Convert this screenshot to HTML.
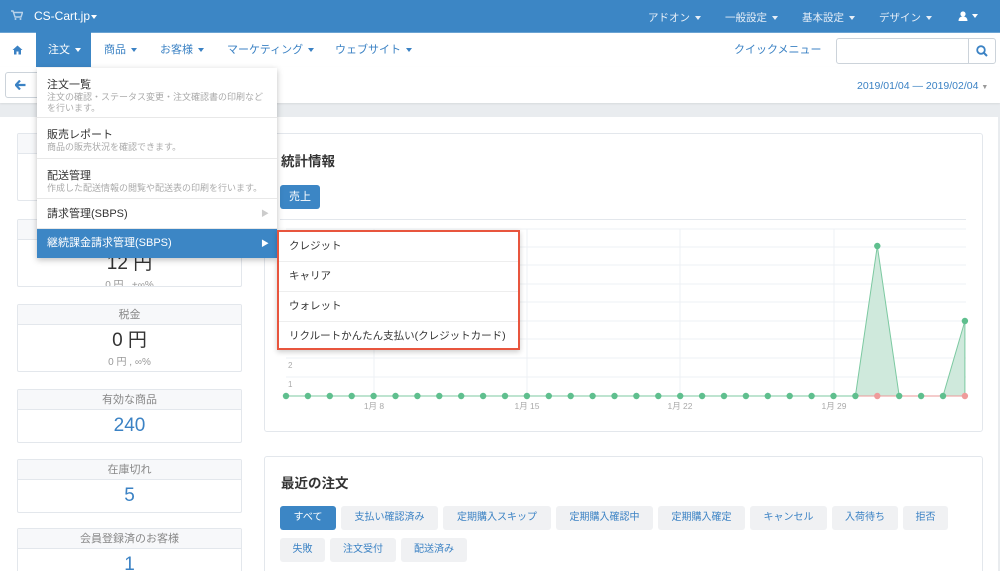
<!DOCTYPE html>
<html><head><meta charset="utf-8"><style>
*{box-sizing:border-box;margin:0;padding:0}
html{width:1000px;height:571px;overflow:hidden}
body{width:1000px;height:571px;overflow:hidden;background:#e9ecef;font-family:"Liberation Sans","Noto Sans CJK JP",sans-serif;font-size:11px;color:#333;position:relative}
.a{position:absolute}
.top{left:0;top:0;width:1000px;height:32px;background:#3c86c5;color:#e6eef7}
.nav{left:0;top:32px;width:1000px;height:35px;background:#fff;border-top:1px solid #6aa3d3}
.nv{top:0;height:35px;line-height:35px;color:#3b82c4;font-size:11px}
.car{display:inline-block;width:0;height:0;border-left:3.5px solid transparent;border-right:3.5px solid transparent;border-top:4px solid currentColor;vertical-align:middle;margin-left:5px}
.tb{left:0;top:67px;width:1000px;height:36px;background:#fff;box-shadow:0 1px 2px rgba(0,0,0,.08)}
.main{left:0;top:117px;width:998px;height:460px;background:#fff}
.card{left:17px;width:225px;border:1px solid #e3e7ec;border-radius:2px;background:#fff;text-align:center;overflow:hidden}
.card .h{height:20px;line-height:20px;background:#f7f8fa;border-bottom:1px solid #e3e7ec;color:#888;font-size:11px}
.big{font-size:19px;color:#333;line-height:24px;margin-top:4px}
.blue{color:#3b82c4}
.sub{color:#999;font-size:10px}
.panel{border:1px solid #e3e7ec;border-radius:3px;background:#fff}
.dd{left:37px;top:68px;width:240px;height:190px;background:#fff;box-shadow:0 2px 6px rgba(0,0,0,.25)}
.di{position:absolute;left:0;width:240px;border-bottom:1px solid #e8e8e8;padding-left:10px}
.di b{display:block;font-weight:normal;font-size:11px;color:#333}
.di i{display:block;font-style:normal;font-size:9px;color:#aaa;line-height:11px}
.sm{left:277px;top:230px;width:243px;height:120px;background:#fff;border:2px solid #e8553e;box-shadow:0 2px 5px rgba(0,0,0,.2)}
.si{position:absolute;left:0;width:239px;height:30px;line-height:28px;padding-left:10px;border-bottom:1px solid #eee;font-size:10.5px}
.btn{position:absolute;height:24px;line-height:24px;border-radius:3px;background:#f0f1f3;color:#3b82c4;font-size:10px;text-align:center}
</style></head><body>
<div class="a top">
 <svg class="a" style="left:11px;top:10px" width="12" height="10"><path d="M0 1h2l2 6h6l1.5-4.5H3" fill="none" stroke="#b9d2ea" stroke-width="1.4"/><circle cx="4.5" cy="9" r="1" fill="#b9d2ea"/><circle cx="9.5" cy="9" r="1" fill="#b9d2ea"/></svg>
 <span class="a" style="left:34px;top:9px;font-size:12px;color:#fff">CS-Cart.jp<span class="car" style="margin-left:1px"></span></span>
 <span class="a" style="left:648px;top:10px;font-size:10.5px">アドオン<span class="car"></span></span>
 <span class="a" style="left:725px;top:10px;font-size:10.5px">一般設定<span class="car"></span></span>
 <span class="a" style="left:802px;top:10px;font-size:10.5px">基本設定<span class="car"></span></span>
 <span class="a" style="left:879px;top:10px;font-size:10.5px">デザイン<span class="car"></span></span>
 <svg class="a" style="left:958px;top:11px" width="10" height="10"><circle cx="5" cy="3" r="2.6" fill="#fff"/><path d="M0.5 10Q0.5 5.5 5 5.5Q9.5 5.5 9.5 10Z" fill="#fff"/></svg>
 <span class="a" style="left:967px;top:10px;color:#fff"><span class="car"></span></span>
</div>
<div class="a nav">
 <svg class="a" style="left:12px;top:12px" width="11" height="10"><path d="M5.5 0.5L0.5 5h1.5v4.5h2.5v-3h2v3h2.5V5h1.5z" fill="#3b82c4"/></svg>
 <div class="a" style="left:36px;top:-1px;width:55px;height:36px;background:#3c86c5"></div>
 <span class="a nv" style="left:48px;color:#fff">注文<span class="car"></span></span>
 <span class="a nv" style="left:104px">商品<span class="car"></span></span>
 <span class="a nv" style="left:160px">お客様<span class="car"></span></span>
 <span class="a nv" style="left:227px">マーケティング<span class="car"></span></span>
 <span class="a nv" style="left:335px">ウェブサイト<span class="car"></span></span>
 <span class="a nv" style="left:734px">クイックメニュー</span>
 <div class="a" style="left:836px;top:5px;width:160px;height:26px;border:1px solid #ccd3da;border-radius:3px"></div>
 <div class="a" style="left:968px;top:5px;width:1px;height:26px;background:#ccd3da"></div>
 <svg class="a" style="left:976px;top:12px" width="12" height="12"><circle cx="5" cy="5" r="3.8" fill="none" stroke="#3b82c4" stroke-width="1.8"/><line x1="8" y1="8" x2="11" y2="11" stroke="#3b82c4" stroke-width="2"/></svg>
</div>
<div class="a tb">
 <div class="a" style="left:5px;top:5px;width:40px;height:26px;border:1px solid #ccd3da;border-radius:3px"></div>
 <svg class="a" style="left:15px;top:13px" width="11" height="10"><path d="M5 0.5L0.8 5L5 9.5M1 5H10.5" fill="none" stroke="#3b82c4" stroke-width="2.2"/></svg>
 <span class="a" style="left:857px;top:13px;color:#3b82c4;font-size:10.5px">2019/01/04 — 2019/02/04 <span style="color:#999;font-size:7px">▼</span></span>
</div>
<div class="a main"></div>
<div class="a card" style="top:133px;height:68px"><div class="h"></div></div>
<div class="a card" style="top:219px;height:68px"><div class="h"></div><div class="big" style="margin-top:12px">12 円</div><div class="sub">0 円 , +∞%</div></div>
<div class="a card" style="top:304px;height:68px"><div class="h">税金</div><div class="big">0 円</div><div class="sub">0 円 , ∞%</div></div>
<div class="a card" style="top:389px;height:54px"><div class="h">有効な商品</div><div class="big blue">240</div></div>
<div class="a card" style="top:459px;height:54px"><div class="h">在庫切れ</div><div class="big blue">5</div></div>
<div class="a card" style="top:528px;height:54px"><div class="h">会員登録済のお客様</div><div class="big blue">1</div></div>

<div class="a panel" style="left:264px;top:133px;width:719px;height:299px"></div>
<span class="a" style="left:281px;top:150px;font-size:13.5px;font-weight:bold">統計情報</span>
<div class="a" style="left:280px;top:185px;width:40px;height:24px;background:#3c86c5;border-radius:3px;color:#fff;text-align:center;line-height:24px;font-size:11px">売上</div>
<div class="a" style="left:280px;top:219px;width:686px;height:1px;background:#e3e7ec"></div>
<svg class="a" style="left:0;top:0" width="1000" height="440">
 <g stroke="#eef1f4" stroke-width="1">
  <line x1="286" x2="966" y1="229" y2="229"/><line x1="286" x2="966" y1="247" y2="247"/><line x1="286" x2="966" y1="265" y2="265"/><line x1="286" x2="966" y1="284" y2="284"/><line x1="286" x2="966" y1="302" y2="302"/><line x1="286" x2="966" y1="321" y2="321"/><line x1="286" x2="966" y1="339" y2="339"/><line x1="286" x2="966" y1="358" y2="358"/><line x1="286" x2="966" y1="377" y2="377"/>
  <line x1="374" x2="374" y1="229" y2="396"/><line x1="527" x2="527" y1="229" y2="396"/><line x1="680" x2="680" y1="229" y2="396"/><line x1="834" x2="834" y1="229" y2="396"/>
 </g>
 <text x="288" y="368" font-size="8" fill="#aaa">2</text><text x="288" y="387" font-size="8" fill="#aaa">1</text>
 <g font-size="8.5" fill="#aaa" text-anchor="middle"><text x="374" y="409">1月 8</text><text x="527" y="409">1月 15</text><text x="680" y="409">1月 22</text><text x="834" y="409">1月 29</text></g>
 <polygon points="855.4,396 877.3,246 899.2,396" fill="#cfe9dc" stroke="#7cc9a1"/>
 <polygon points="943,396 964.9,321 964.9,396" fill="#cfe9dc" stroke="#7cc9a1"/>
 <line x1="286" x2="966" y1="396" y2="396" stroke="#7cc9a1"/>
 <line x1="855" x2="966" y1="396" y2="396" stroke="#eb9a9a"/>
 <g fill="#5fbf8e">
 <circle cx="286" cy="396" r="3.2"/><circle cx="307.9" cy="396" r="3.2"/><circle cx="329.8" cy="396" r="3.2"/><circle cx="351.7" cy="396" r="3.2"/><circle cx="373.6" cy="396" r="3.2"/><circle cx="395.5" cy="396" r="3.2"/><circle cx="417.4" cy="396" r="3.2"/><circle cx="439.3" cy="396" r="3.2"/><circle cx="461.2" cy="396" r="3.2"/><circle cx="483.1" cy="396" r="3.2"/><circle cx="505" cy="396" r="3.2"/><circle cx="526.9" cy="396" r="3.2"/><circle cx="548.8" cy="396" r="3.2"/><circle cx="570.7" cy="396" r="3.2"/><circle cx="592.6" cy="396" r="3.2"/><circle cx="614.5" cy="396" r="3.2"/><circle cx="636.4" cy="396" r="3.2"/><circle cx="658.3" cy="396" r="3.2"/><circle cx="680.2" cy="396" r="3.2"/><circle cx="702.1" cy="396" r="3.2"/><circle cx="724" cy="396" r="3.2"/><circle cx="745.9" cy="396" r="3.2"/><circle cx="767.8" cy="396" r="3.2"/><circle cx="789.7" cy="396" r="3.2"/><circle cx="811.6" cy="396" r="3.2"/><circle cx="833.5" cy="396" r="3.2"/><circle cx="855.4" cy="396" r="3.2"/><circle cx="877.3" cy="246" r="3.2"/><circle cx="899.2" cy="396" r="3.2"/><circle cx="921.1" cy="396" r="3.2"/><circle cx="943" cy="396" r="3.2"/><circle cx="964.9" cy="321" r="3.2"/>
 </g>
 <circle cx="877.3" cy="396" r="3.2" fill="#ef9b9b"/><circle cx="964.9" cy="396" r="3.2" fill="#ef9b9b"/>
</svg>

<div class="a panel" style="left:264px;top:456px;width:719px;height:130px"></div>
<span class="a" style="left:281px;top:472px;font-size:13.5px;font-weight:bold">最近の注文</span>
<div class="btn" style="left:280px;top:506px;width:56px;background:#3c86c5;color:#fff">すべて</div>
<div class="btn" style="left:341px;top:506px;width:97px">支払い確認済み</div>
<div class="btn" style="left:443px;top:506px;width:108px">定期購入スキップ</div>
<div class="btn" style="left:556px;top:506px;width:97px">定期購入確認中</div>
<div class="btn" style="left:658px;top:506px;width:87px">定期購入確定</div>
<div class="btn" style="left:750px;top:506px;width:77px">キャンセル</div>
<div class="btn" style="left:832px;top:506px;width:66px">入荷待ち</div>
<div class="btn" style="left:903px;top:506px;width:45px">拒否</div>
<div class="btn" style="left:280px;top:538px;width:45px">失敗</div>
<div class="btn" style="left:330px;top:538px;width:66px">注文受付</div>
<div class="btn" style="left:401px;top:538px;width:66px">配送済み</div>

<div class="a dd">
 <div class="di" style="top:0;height:50px;padding-top:8px"><b>注文一覧</b><i>注文の確認・ステータス変更・注文確認書の印刷など<br>を行います。</i></div>
 <div class="di" style="top:50px;height:41px;padding-top:8px"><b>販売レポート</b><i>商品の販売状況を確認できます。</i></div>
 <div class="di" style="top:91px;height:40px;padding-top:8px"><b>配送管理</b><i>作成した配送情報の閲覧や配送表の印刷を行います。</i></div>
 <div class="di" style="top:131px;height:30px;line-height:30px"><b>請求管理(SBPS)</b><span class="a" style="right:8px;top:0;color:#ccc;font-size:8px">▶</span></div>
 <div class="di" style="top:161px;height:29px;line-height:29px;background:#3c86c5;border:none"><b style="color:#fff">継続課金請求管理(SBPS)</b><span class="a" style="right:8px;top:0;color:#fff;font-size:8px">▶</span></div>
</div>
<div class="a sm">
 <div class="si" style="top:0">クレジット</div>
 <div class="si" style="top:30px">キャリア</div>
 <div class="si" style="top:60px">ウォレット</div>
 <div class="si" style="top:90px;border:none">リクルートかんたん支払い(クレジットカード)</div>
</div>
</body></html>
